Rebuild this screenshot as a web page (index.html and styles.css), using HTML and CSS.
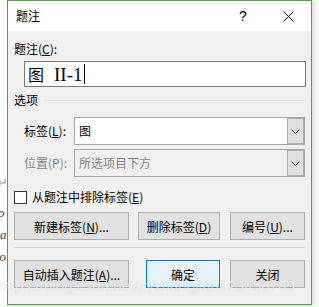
FILE: index.html
```html
<!DOCTYPE html>
<html lang="zh-CN">
<head>
    <meta charset="UTF-8">
    <title>题注</title>
    <link rel="stylesheet" href="styles.css">
</head>
<body>
    <div class="screen">
        <div class="doc-edge">
            <span class="frag f1">↵</span>
            <span class="frag f2">o</span>
            <span class="frag f3">ra</span>
            <span class="frag f4">ro</span>
        </div>

        <div class="dialog">
            <div class="titlebar">
                <span class="title">题注</span>
                <span class="help">?</span>
                <span class="close">
                    <svg width="11" height="11" viewBox="0 0 11 11">
                        <path d="M0.5 0.5 L10.5 10.5 M10.5 0.5 L0.5 10.5" stroke="#000" stroke-width="1"/>
                    </svg>
                </span>
            </div>

            <div class="dlg-body">
                <div class="label">题注(<u>C</u>):</div>
                <div class="caption-input">
                    <span class="cap-text"><span class="cap-tag">图</span>II-1</span><span class="caret"></span>
                </div>

                <div class="group-head">
                    <span>选项</span>
                    <span class="rule"></span>
                </div>

                <div class="field-row">
                    <span class="field-label">标签(<u>L</u>):</span>
                    <div class="combo">
                        <span class="combo-text">图</span>
                        <span class="combo-btn">
                            <svg width="9" height="5" viewBox="0 0 9 5"><path d="M0.5 0.5 L4.5 4.5 L8.5 0.5" fill="none" stroke="#333" stroke-width="1"/></svg>
                        </span>
                    </div>
                </div>
                <div class="field-row disabled">
                    <span class="field-label">位置(P):</span>
                    <div class="combo">
                        <span class="combo-text">所选项目下方</span>
                        <span class="combo-btn">
                            <svg width="9" height="5" viewBox="0 0 9 5"><path d="M0.5 0.5 L4.5 4.5 L8.5 0.5" fill="none" stroke="#333" stroke-width="1"/></svg>
                        </span>
                    </div>
                </div>

                <div class="check-row">
                    <span class="checkbox"></span>
                    <span>从题注中排除标签(<u>E</u>)</span>
                </div>

                <div class="btn-row">
                    <button class="btn w-wide">新建标签(<u>N</u>)...</button>
                    <button class="btn w-mid">删除标签(<u>D</u>)</button>
                    <button class="btn w-small">编号(<u>U</u>)...</button>
                </div>

                <div class="sep"></div>

                <div class="btn-row">
                    <button class="btn w-wide">自动插入题注(<u>A</u>)...</button>
                    <button class="btn btn-default w-ok">确定</button>
                    <button class="btn w-small">关闭</button>
                </div>
            </div>
        </div>

        <div class="watermark">https://blog.csdn.net/zyxhangjian123456789</div>
    </div>
</body>
</html>
```

FILE: styles.css
```css
body {
    margin: 0;
    background-color: #fff;
    font-family: "Noto Sans CJK SC", "Noto Sans", sans-serif;
    font-size: 12px;
    color: #000;
}
u {
    text-decoration: underline;
    text-underline-offset: 1px;
}
.screen {
    position: relative;
    width: 319px;
    height: 307px;
    overflow: hidden;
    display: flex;
    background-color: #f7f7f7;
}
.doc-edge {
    position: relative;
    width: 7px;
    height: 305px;
    background-color: #fff;
    flex-shrink: 0;
}
.frag {
    position: absolute;
    font-family: "Liberation Serif", serif;
    font-style: italic;
    font-size: 13px;
    color: #444;
    line-height: 14px;
}
.f1 { top: 176px; left: -3px; color: #999; font-style: normal; }
.f2 { top: 206px; left: -2px; }
.f3 { top: 228px; left: -5px; }
.f4 { top: 250px; left: -5px; }

.dialog {
    width: 303px;
    height: 303px;
    border: 1px solid #4aa53a;
    background-color: #f0f0f0;
    display: flex;
    flex-direction: column;
    box-shadow: 1px 1px 4px rgba(0, 0, 0, 0.15);
}
.titlebar {
    height: 30px;
    background-color: #fff;
    display: flex;
    align-items: center;
    flex-shrink: 0;
}
.title {
    margin-left: 8px;
    font-size: 12px;
    line-height: 16px;
}
.help {
    margin-left: auto;
    font-family: "Liberation Sans", sans-serif;
    font-size: 14px;
    width: 12px;
    text-align: center;
}
.close {
    margin-left: 34px;
    margin-right: 17px;
    display: flex;
    align-items: center;
}
.dlg-body {
    padding: 10px 6px 0 6px;
    display: flex;
    flex-direction: column;
}
.label {
    line-height: 16px;
}
.caption-input {
    margin: 4px 0 0 10px;
    width: 280px;
    height: 24px;
    border: 1px solid #7a7a7a;
    background-color: #fff;
    display: flex;
    align-items: center;
}
.cap-text {
    margin-left: 3px;
    font-family: "Liberation Serif", serif;
    font-size: 19px;
    line-height: 22px;
}
.cap-tag {
    font-family: "Noto Sans CJK SC", sans-serif;
    font-size: 16px;
    margin-right: 10px;
}
.caret {
    width: 1px;
    height: 20px;
    background-color: #000;
    margin-left: 1px;
}
.group-head {
    margin-top: 5px;
    display: flex;
    align-items: center;
    line-height: 16px;
}
.group-head .rule {
    flex: 1;
    height: 1px;
    margin-left: 6px;
    background-color: #dcdcdc;
}
.field-row {
    display: flex;
    align-items: center;
    margin-top: 9px;
    padding-left: 10px;
}
.field-row + .field-row {
    margin-top: 4px;
}
.field-label {
    width: 50px;
    line-height: 16px;
}
.combo {
    width: 229px;
    height: 26px;
    border: 1px solid #a6a6a6;
    background-color: #fff;
    display: flex;
    align-items: center;
}
.combo-text {
    flex: 1;
    margin-left: 4px;
    line-height: 16px;
}
.combo-btn {
    width: 15px;
    height: 24px;
    border: 1px solid #adadad;
    background-color: #e1e1e1;
    display: flex;
    align-items: center;
    justify-content: center;
}
.disabled .field-label,
.disabled .combo-text {
    color: #838383;
}
.disabled .combo {
    background-color: #f0f0f0;
}
.check-row {
    margin-top: 12px;
    display: flex;
    align-items: center;
    line-height: 16px;
}
.checkbox {
    width: 11px;
    height: 11px;
    border: 1px solid #333;
    background-color: #fff;
    margin-right: 5px;
}
.btn-row {
    margin-top: 7px;
    display: flex;
}
.btn {
    height: 28px;
    padding: 0;
    border: 1px solid #adadad;
    background-color: #e1e1e1;
    font-family: inherit;
    font-size: 12px;
    color: #000;
}
.w-wide { width: 115px; }
.w-mid { width: 82px; margin-left: 9px; }
.w-small { width: 75px; margin-left: 10px; }
.w-ok { width: 74px; margin-left: 17px; }
.btn-default {
    background-color: #e5f1fb;
    border-color: #0078d7;
}
.sep {
    margin-top: 7px;
    height: 1px;
    background-color: #d7d7d7;
}
.sep + .btn-row {
    margin-top: 12px;
}
.watermark {
    position: absolute;
    left: -2px;
    top: 277px;
    font-family: "Liberation Sans", sans-serif;
    font-size: 15px;
    letter-spacing: 0.1px;
    color: rgba(255, 255, 255, 0.75);
    text-shadow: 0 0 1px rgba(0, 0, 0, 0.2);
    white-space: nowrap;
}
```
